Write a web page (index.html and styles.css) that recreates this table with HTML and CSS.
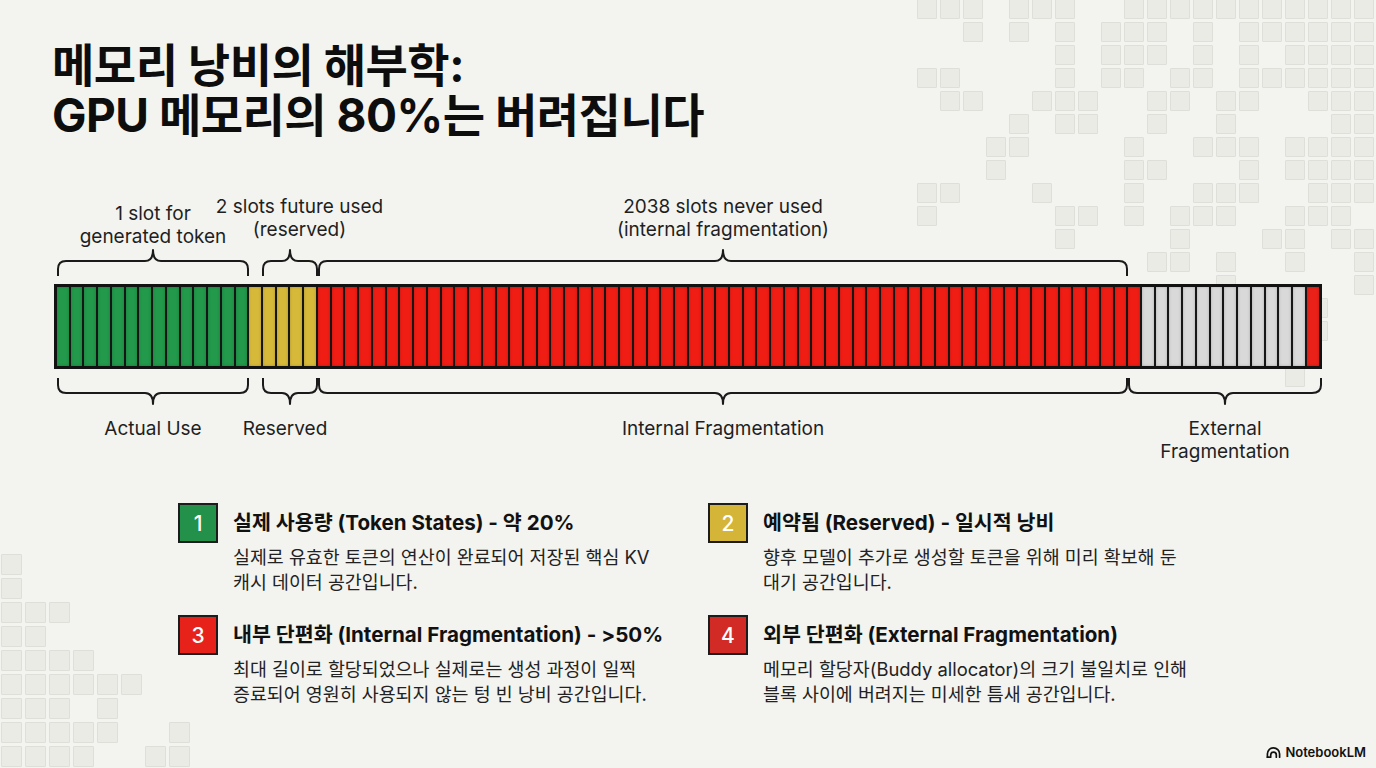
FILE: index.html
```html
<!DOCTYPE html>
<html lang="ko">
<head>
<meta charset="utf-8">
<title>메모리 낭비의 해부학</title>
<link rel="stylesheet" href="styles.css">
</head>
<body>
<div class="slide">
  <div class="decor decor-tr" id="decorTR"></div>
  <div class="decor decor-bl" id="decorBL"></div>

  <main class="content">
    <h1 class="title"><span class="title-line">메모리 낭비의 해부학:</span><span class="title-line">GPU 메모리의 80%는 버려집니다</span></h1>

    <section class="diagram">
      <div class="lbl lbl-top col-a lbl-low">1 slot for<br>generated token</div>
      <div class="lbl lbl-top col-b lbl-high lbl-shift-r">2 slots future used<br>(reserved)</div>
      <div class="lbl lbl-top col-c lbl-high">2038 slots never used<br>(internal fragmentation)</div>

      <svg class="brace brace-t col-a" width="192" height="28" viewBox="0 0 192 28"><path d="M1 28V21Q1 13 9 13H88Q96 13 96 2Q96 13 104 13H183Q191 13 191 21V28"/></svg>
      <svg class="brace brace-t col-b" width="56" height="28" viewBox="0 0 56 28"><path d="M1 28V21Q1 13 9 13H20Q28 13 28 2Q28 13 36 13H47Q55 13 55 21V28"/></svg>
      <svg class="brace brace-t col-c" width="810" height="28" viewBox="0 0 810 28"><path d="M1 28V21Q1 13 9 13H397Q405 13 405 2Q405 13 413 13H801Q809 13 809 21V28"/></svg>

      <div class="bar" id="bar"></div>

      <svg class="brace brace-b col-a" width="192" height="28" viewBox="0 0 192 28"><path d="M1 0V7Q1 15 9 15H88Q96 15 96 26Q96 15 104 15H183Q191 15 191 7V0"/></svg>
      <svg class="brace brace-b col-b" width="56" height="28" viewBox="0 0 56 28"><path d="M1 0V7Q1 15 9 15H20Q28 15 28 26Q28 15 36 15H47Q55 15 55 7V0"/></svg>
      <svg class="brace brace-b col-c" width="810" height="28" viewBox="0 0 810 28"><path d="M1 0V7Q1 15 9 15H397Q405 15 405 26Q405 15 413 15H801Q809 15 809 7V0"/></svg>
      <svg class="brace brace-b col-d" width="194" height="28" viewBox="0 0 194 28"><path d="M1 0V7Q1 15 9 15H89Q97 15 97 26Q97 15 105 15H184Q193 15 193 7V0"/></svg>

      <div class="lbl lbl-bot col-a">Actual Use</div>
      <div class="lbl lbl-bot col-b lbl-shift-l">Reserved</div>
      <div class="lbl lbl-bot col-c">Internal Fragmentation</div>
      <div class="lbl lbl-bot col-d">External<br>Fragmentation</div>
    </section>

    <section class="legend">
      <div class="item">
        <div class="num num-green">1</div>
        <div class="txt">
          <h2 class="item-title">실제 사용량 (Token States) - 약 20%</h2>
          <p class="item-desc">실제로 유효한 토큰의 연산이 완료되어 저장된 핵심 KV<br>캐시 데이터 공간입니다.</p>
        </div>
      </div>
      <div class="item">
        <div class="num num-yellow">2</div>
        <div class="txt">
          <h2 class="item-title">예약됨 (Reserved) - 일시적 낭비</h2>
          <p class="item-desc">향후 모델이 추가로 생성할 토큰을 위해 미리 확보해 둔<br>대기 공간입니다.</p>
        </div>
      </div>
      <div class="item">
        <div class="num num-red">3</div>
        <div class="txt">
          <h2 class="item-title">내부 단편화 (Internal Fragmentation) - &gt;50%</h2>
          <p class="item-desc">최대 길이로 할당되었으나 실제로는 생성 과정이 일찍<br>증료되어 영원히 사용되지 않는 텅 빈 낭비 공간입니다.</p>
        </div>
      </div>
      <div class="item">
        <div class="num num-red2">4</div>
        <div class="txt">
          <h2 class="item-title">외부 단편화 (External Fragmentation)</h2>
          <p class="item-desc">메모리 할당자(Buddy allocator)의 크기 불일치로 인해<br>블록 사이에 버려지는 미세한 틈새 공간입니다.</p>
        </div>
      </div>
    </section>
  </main>

  <div class="brand">
    <svg class="brand-icon" width="15" height="12" viewBox="0 0 16 12"><path d="M1.5 11.5V8A6.5 6.5 0 0 1 14.5 8v3.5"/><path d="M5 11.5V9.2a3 3 0 0 1 6 0v2.3"/><path d="M1.5 11.5h2"/></svg>
    <span>NotebookLM</span>
  </div>
</div>
<script src="script.js"></script>
</body>
</html>
```

FILE: styles.css
```css
html, body {
  margin: 0;
  padding: 0;
  background: #f3f3ef;
}

.slide {
  position: relative;
  width: 1376px;
  height: 768px;
  overflow: hidden;
  background: #f3f3ef;
  font-family: Inter, "Noto Sans CJK KR", sans-serif;
  color: #1a1a1a;
}

/* decorative background squares */
.decor {
  position: absolute;
  display: grid;
  gap: 3px;
  z-index: 0;
}
.decor-tr {
  left: 917px;
  top: -1px;
  grid-template-columns: repeat(20, 20px);
  grid-auto-rows: 20px;
}
.decor-bl {
  left: 1px;
  top: 554px;
  grid-template-columns: repeat(8, 21px);
  grid-auto-rows: 21px;
}
.sq-on {
  box-sizing: border-box;
  background: #ebebe6;
  border: 1px solid #dfdfd9;
  border-radius: 1px;
}

.content {
  position: relative;
  z-index: 1;
  padding-top: 40px;
}

.title {
  margin: 0 0 0 52px;
  font-size: 46px;
  line-height: 50px;
  font-weight: 700;
  letter-spacing: -0.5px;
  color: #0d0d0d;
}
.title-line {
  display: block;
  height: 50px;
}

/* diagram */
.diagram {
  margin: 55px 0 0 54px;
  width: 1268px;
  display: grid;
  grid-template-columns: 3px 192px 13px 56px 810px 194px;
}
.col-a { grid-column: 2; }
.col-b { grid-column: 4; }
.col-c { grid-column: 5; }
.col-d { grid-column: 6; }

.lbl {
  display: flex;
  justify-content: center;
  text-align: center;
  white-space: nowrap;
  font-size: 19px;
  line-height: 23px;
  color: #1f1f1f;
}
.lbl-top {
  grid-row: 1;
  align-self: end;
}
.lbl-low { margin-top: 7px; }
.lbl-high { margin-bottom: 7px; }
.lbl-shift-r { padding-left: 19px; }
.lbl-shift-l { padding-right: 10px; }
.lbl-bot {
  grid-row: 5;
  margin-top: 11px;
}

.brace {
  display: block;
  fill: none;
  stroke: #1a1a1a;
  stroke-width: 2;
  stroke-linecap: round;
  stroke-linejoin: round;
}
.brace-t { grid-row: 2; }
.brace-b { grid-row: 4; margin-top: 9px; }

.bar {
  grid-row: 3;
  grid-column: 1 / -1;
  margin-top: 8px;
  height: 85px;
  box-sizing: border-box;
  border: 3px solid #121212;
  background: #121212;
  display: flex;
}
.slot {
  flex: 1 1 0;
  box-shadow: inset 0 0 3px rgba(0, 0, 0, 0.22);
}
.slot + .slot {
  border-left: 2px solid #161616;
}
.slot-g { background: #22994b; }
.slot-y { background: #d7b93a; }
.slot-r { background: #f01d14; }
.slot-x { background: #d9d9d9; }
.slot-r2 { background: #ea2118; }

/* legend */
.legend {
  margin: 40px 0 0 178px;
  display: grid;
  grid-template-columns: 530px 530px;
  row-gap: 20px;
}
.item {
  display: flex;
  align-items: flex-start;
  gap: 15px;
}
.num {
  flex: none;
  width: 40px;
  height: 40px;
  box-sizing: border-box;
  border: 2px solid #1c1c1c;
  display: flex;
  align-items: center;
  justify-content: center;
  color: #ffffff;
  font-size: 21px;
  font-weight: 500;
}
.num-green { background: #239149; }
.num-yellow { background: #d4b537; }
.num-red { background: #e6221b; }
.num-red2 { background: #d22a24; }

.item-title {
  margin: 6px 0 0;
  font-size: 20.6px;
  line-height: 28px;
  font-weight: 700;
  color: #111111;
}
.item-desc {
  margin: 8px 0 0;
  font-size: 18.4px;
  line-height: 25px;
  color: #222222;
}

/* brand */
.brand {
  position: absolute;
  right: 10px;
  bottom: 8px;
  z-index: 2;
  display: flex;
  align-items: center;
  gap: 4px;
  font-size: 13px;
  font-weight: 600;
  color: #111111;
}
.brand-icon {
  display: block;
  fill: none;
  stroke: #111111;
  stroke-width: 1.8;
  stroke-linecap: round;
}
```

FILE: script.js
```js
(function () {
  var topRight = [
    "111.111..11111111111",
    "..1.1.1.111.1.111111",
    "......1.111.1.1.1111",
    "11....1.11.11.111111",
    ".11..111..11.11..111",
    "....1.11..1..1....11",
    "...11....1..111.1111",
    "...1.....11...1.1111",
    "11...1...1..111..111",
    "1.....11.1.111..111.",
    "......1....1...11.11",
    "..........11.1..1..1",
    ".............1.....1",
    ".................1..",
    ".................1..",
    "....................",
    "................1..."
  ];
  var bottomLeft = [
    "1.......",
    "1.......",
    "111.....",
    "11......",
    "1111....",
    "111111..",
    "111.1...",
    "11111..1",
    "1111..11"
  ];

  function fill(id, rows) {
    var el = document.getElementById(id);
    rows.forEach(function (row) {
      for (var i = 0; i < row.length; i++) {
        var d = document.createElement("i");
        d.className = row[i] === "1" ? "sq sq-on" : "sq";
        el.appendChild(d);
      }
    });
  }
  fill("decorTR", topRight);
  fill("decorBL", bottomLeft);

  var segments = [["g", 14], ["y", 5], ["r", 60], ["x", 12], ["r2", 1]];
  var bar = document.getElementById("bar");
  segments.forEach(function (s) {
    for (var i = 0; i < s[1]; i++) {
      var d = document.createElement("div");
      d.className = "slot slot-" + s[0];
      bar.appendChild(d);
    }
  });
})();
```
